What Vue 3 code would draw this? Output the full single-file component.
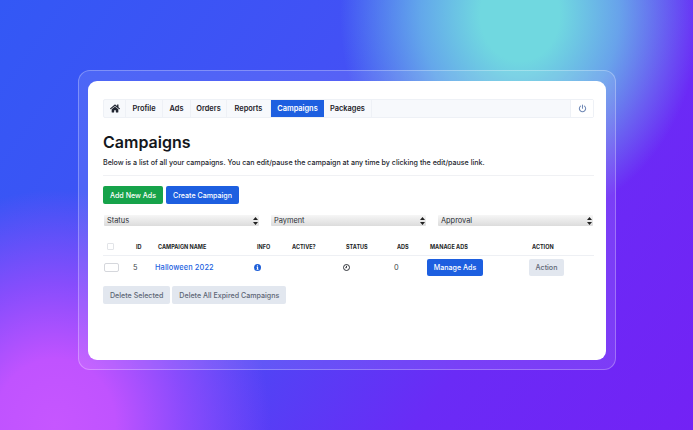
<script setup>
const tabs = [
  { label: 'Profile', w: 37 },
  { label: 'Ads', w: 28 },
  { label: 'Orders', w: 36 },
  { label: 'Reports', w: 44 },
  { label: 'Campaigns', w: 53, active: true },
  { label: 'Packages', w: 48 },
]
const filters = ['Status', 'Payment', 'Approval']
const heads = ['ID', 'Campaign Name', 'Info', 'Active?', 'Status', 'Ads', 'Manage Ads', 'Action']
</script>

<template>
  <div class="page">
    <div class="frame">
      <div class="card">
        <nav class="nav">
          <a class="tab home">
            <svg width="10" height="9" viewBox="0 0 576 512"><path fill="#1f2430" d="M280 148 96 300v164c0 9 7 16 16 16l112-.3c9 0 16-7 16-16V368c0-9 7-16 16-16h64c9 0 16 7 16 16v96c0 9 7 16 16 16l112 .3c9 0 16-7 16-16V300L296 148c-4-4-12-4-16 0zm292 103-84-69V44c0-7-5-12-12-12h-56c-7 0-12 5-12 12v73l-90-74c-18-14-43-14-61 0L4 251c-5 4-6 12-2 17l26 31c4 5 12 6 17 2L280 107c4-4 12-4 16 0l235 194c5 4 13 3 17-2l26-31c4-5 3-13-2-17z"/></svg>
          </a>
          <a v-for="t in tabs" :key="t.label" class="tab" :class="{ active: t.active }" :style="{ width: t.w + 'px' }">{{ t.label }}</a>
          <span class="nav-fill"></span>
          <a class="tab power">
            <svg width="9" height="9" viewBox="0 0 12 12" fill="none" stroke="#6f88b5" stroke-width="1.4" stroke-linecap="round"><path d="M6 1.2v4.3"/><path d="M3.4 2.8a4.2 4.2 0 1 0 5.2 0"/></svg>
          </a>
        </nav>

        <h1 class="title">Campaigns</h1>
        <p class="lead">Below is a list of all your campaigns. You can edit/pause the campaign at any time by clicking the edit/pause link.</p>
        <hr class="rule" />

        <div class="actions">
          <button class="btn green">Add New Ads</button>
          <button class="btn blue">Create Campaign</button>
        </div>

        <div class="filters">
          <div v-for="f in filters" :key="f" class="select">
            <span>{{ f }}</span>
            <svg width="5" height="8" viewBox="0 0 5 8"><path fill="#222" d="M2.5 0 5 3H0zM2.5 8 0 5h5z"/></svg>
          </div>
        </div>

        <div class="table">
          <div class="row head">
            <div class="cell"><span class="check"></span></div>
            <div v-for="h in heads" :key="h" class="cell">{{ h }}</div>
          </div>
          <div class="row body">
            <div class="cell"><span class="input"></span></div>
            <div class="cell">5</div>
            <div class="cell"><a class="link">Halloween 2022</a></div>
            <div class="cell">
              <svg width="7" height="7" viewBox="0 0 14 14"><circle cx="7" cy="7" r="7" fill="#1d5ed8"/><rect x="5.9" y="5.8" width="2.4" height="5" fill="#fff"/><rect x="5" y="10" width="4.2" height="1.2" fill="#fff"/><rect x="5" y="5.6" width="3" height="1.2" fill="#fff"/><circle cx="7" cy="3.6" r="1.3" fill="#fff"/></svg>
            </div>
            <div class="cell"></div>
            <div class="cell">
              <svg width="7" height="7" viewBox="0 0 14 14" fill="none" stroke="#1c1f26" stroke-width="1.8"><circle cx="7" cy="7" r="6"/><path d="M7 3.6V7.4H4.6"/></svg>
            </div>
            <div class="cell">0</div>
            <div class="cell"><button class="btn blue manage">Manage Ads</button></div>
            <div class="cell"><button class="btn grey action">Action</button></div>
          </div>
        </div>

        <div class="actions bottom">
          <button class="btn grey">Delete Selected</button>
          <button class="btn grey">Delete All Expired Campaigns</button>
        </div>
      </div>
    </div>
  </div>
</template>

<style>
html, body { margin: 0; }
</style>

<style scoped>
.page {
  width: 693px;
  height: 430px;
  overflow: hidden;
  box-sizing: border-box;
  padding: 70px 77px 60px 78px;
  font-family: Inter, "Liberation Sans", sans-serif;
  background:
    radial-gradient(ellipse 180px 210px at 520px 15px, #70d8e0 0%, #70d8e0 22%, rgba(106,190,232,.8) 55%, rgba(100,140,235,0) 100%),
    radial-gradient(ellipse 215px 235px at 55px 425px, #c656ff 0%, #c053ff 28%, rgba(160,75,255,.75) 60%, rgba(120,70,250,0) 100%),
    linear-gradient(125deg, #3358f5 0%, #4450f5 42%, #6a2bf6 72%, #7322f5 100%);
}
.frame {
  box-sizing: border-box;
  height: 300px;
  padding: 10px 9px;
  border: 1px solid rgba(255,255,255,.28);
  border-radius: 12px;
  background: rgba(255,255,255,.1);
}
.card {
  box-sizing: border-box;
  height: 279px;
  padding: 18px 12px 0 15px;
  background: #fff;
  border-radius: 9px;
  color: #16191f;
}
.nav {
  display: flex;
  height: 19px;
  background: #f7f9fc;
  border: 1px solid #eef1f6;
  border-radius: 2px;
  box-sizing: border-box;
}
.tab {
  display: flex;
  align-items: center;
  justify-content: center;
  box-sizing: border-box;
  font-size: 7.4px;
  font-weight: 600;
  color: #1d2129;
  border-right: 1px solid #eef1f6;
}
.home { width: 22px; }
.tab.active {
  background: #1d5fe0;
  color: #fff;
  border-right: 0;
}
.nav-fill { flex: 1; }
.power {
  width: 23px;
  background: #fff;
  border-right: 0;
  border-left: 1px solid #eef1f6;
}
.title {
  margin: 13px 0 0;
  font-size: 16px;
  line-height: 22px;
  font-weight: 600;
  color: #14171c;
}
.lead {
  margin: 4px 0 0;
  font-size: 7.1px;
  line-height: 12px;
  font-weight: 500;
  color: #23262d;
  white-space: nowrap;
}
.rule {
  margin: 6px 0 0;
  border: 0;
  border-top: 1px solid #f0f1f4;
}
.actions {
  display: flex;
  gap: 3px;
  margin-top: 10px;
}
.btn {
  height: 18px;
  padding: 0 7px;
  border: 0;
  border-radius: 2px;
  font-family: inherit;
  font-size: 7.1px;
  font-weight: 500;
  white-space: nowrap;
}
.green { background: #16a34a; color: #fff; }
.blue { background: #1d5fe0; color: #fff; }
.grey { background: #e2e7ef; color: #5d6675; }
.filters {
  display: grid;
  grid-template-columns: repeat(3, 155px);
  column-gap: 12px;
  margin: 11px 0 0 1px;
}
.select {
  display: flex;
  align-items: center;
  justify-content: space-between;
  box-sizing: border-box;
  height: 11px;
  padding: 0 1px 0 3px;
  font-size: 7.4px;
  color: #2b2f36;
  background: linear-gradient(#f6f6f6, #dcdcdc);
  border-radius: 1px;
}
.table { margin-top: 14px; }
.row {
  display: grid;
  grid-template-columns: 30px 22px 99px 35px 54px 51px 33px 102px 1fr;
  align-items: center;
}
.head {
  height: 13px;
  padding-bottom: 2px;
  border-bottom: 1px solid #eef0f4;
  font-size: 5.5px;
  font-weight: 700;
  text-transform: uppercase;
  color: #1b1e25;
}
.head .cell { padding-left: 3px; }
.head .cell:first-child { padding-left: 4px; }
.check {
  display: block;
  width: 5px;
  height: 5px;
  border: 1px solid #e2e4e8;
  border-radius: 1px;
}
.body {
  height: 22px;
  font-size: 7.4px;
  color: #3b3f47;
}
.input {
  display: block;
  width: 15px;
  height: 9px;
  margin-left: 1px;
  box-sizing: border-box;
  border: 1px solid #d5d7dc;
  border-radius: 2px;
  background: #fff;
}
.link { color: #1d5fe0; font-weight: 500; letter-spacing: .1px; }
.cell svg { display: block; }
.manage { height: 17px; width: 56px; padding: 0; }
.action { height: 17px; width: 35px; padding: 0; }
.bottom { margin-top: 8px; gap: 2px; }
</style>
